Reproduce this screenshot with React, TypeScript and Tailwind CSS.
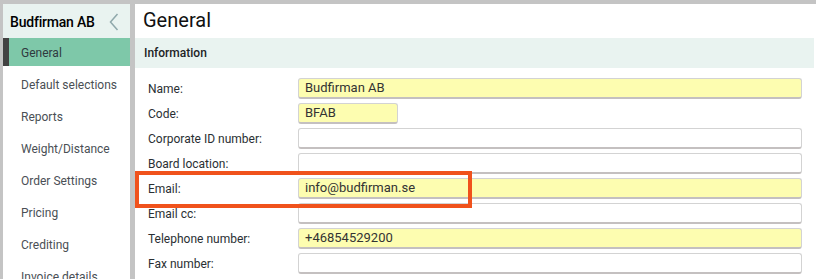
import React from "react";

const items = [
  "General",
  "Default selections",
  "Reports",
  "Weight/Distance",
  "Order Settings",
  "Pricing",
  "Crediting",
  "Invoice details",
];

const rows: { label: string; value: string; yellow: boolean; short?: boolean }[] = [
  { label: "Name:", value: "Budfirman AB", yellow: true },
  { label: "Code:", value: "BFAB", yellow: true, short: true },
  { label: "Corporate ID number:", value: "", yellow: false },
  { label: "Board location:", value: "", yellow: false },
  { label: "Email:", value: "info@budfirman.se", yellow: true },
  { label: "Email cc:", value: "", yellow: false },
  { label: "Telephone number:", value: "+46854529200", yellow: true },
  { label: "Fax number:", value: "", yellow: false },
];

export default function App() {
  return (
    <div
      className="w-[816px] h-[279px] overflow-hidden bg-[#c4c4c4] pt-[4px] pl-[3px] flex"
      style={{ fontFamily: "Roboto, 'Liberation Sans', sans-serif" }}
    >
      <div className="w-[127px] shrink-0 bg-white flex flex-col h-[400px]">
        <div className="h-[34px] bg-[#e9f3f0] flex items-center justify-between pl-[7px] pr-[11px]">
          <span className="text-[14px] font-medium text-black tracking-[-0.2px] mt-[3px]">Budfirman AB</span>
          <svg width="10" height="18" viewBox="0 0 10 18" className="mt-[2px]">
            <path d="M8.5 1 L1.5 9 L8.5 17" fill="none" stroke="#8fa8ab" strokeWidth="1.5" />
          </svg>
        </div>
        {items.map((it, i) =>
          i === 0 ? (
            <div
              key={it}
              className="shrink-0 h-[28px] flex items-center text-[12px] bg-[#7ec8a9] text-[#2f3a40] border-l-[6px] border-[#424242] pl-[12px] pt-[1px]"
            >
              {it}
            </div>
          ) : (
            <div
              key={it}
              className="shrink-0 h-[32px] flex items-center text-[12px] text-[#4a4f55] pl-[18px] pt-[6px]"
            >
              {it}
            </div>
          )
        )}
      </div>
      <div className="w-[5px] shrink-0" />
      <div className="flex-1 bg-white relative">
        <div className="h-[34px] pl-[8px] flex items-center text-[20px] text-[#111] pb-[2px]">General</div>
        <div className="h-[30px] bg-[#e9f3f0] mr-[2px] flex items-center pl-[9px] text-[12px] font-medium text-[#1d2326]">
          Information
        </div>
        <div className="pt-[10px] flex flex-col gap-[4px] pl-[13px] pr-[14px]">
          {rows.map((r) => (
            <div key={r.label} className="flex items-center h-[21px]">
              <div className="w-[150px] shrink-0 text-[12px] text-[#2a2f33] pt-[1px]">{r.label}</div>
              <div
                className={
                  "h-[21px] rounded-[3px] border border-[#d3d3d3] border-b-[#c4c0c0] border-b-2 flex items-center pl-[6px] text-[13px] text-[#333] " +
                  (r.yellow ? "bg-[#fdfdb0] " : "bg-white ") +
                  (r.short ? "w-[100px]" : "flex-1")
                }
              >
                {r.value}
              </div>
            </div>
          ))}
        </div>
        <div className="absolute left-[0px] top-[167px] w-[337px] h-[37px] border-[4px] border-[#f0521c]" />
      </div>
    </div>
  );
}
